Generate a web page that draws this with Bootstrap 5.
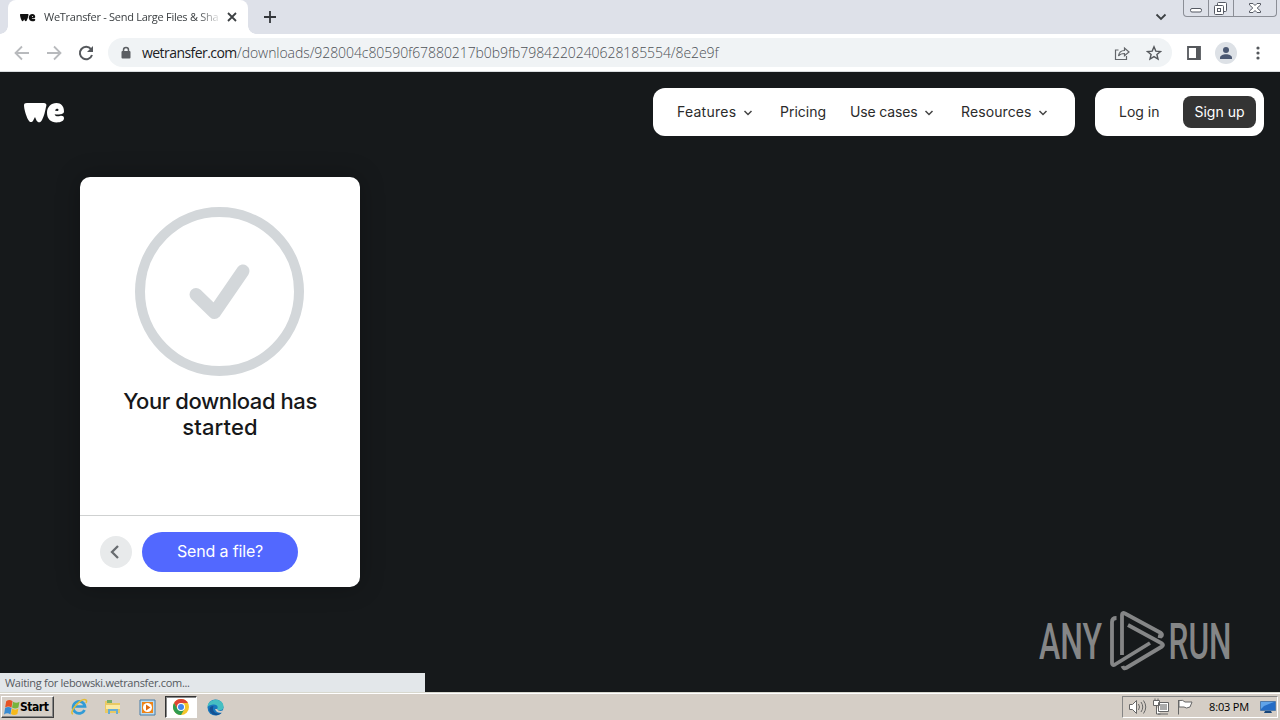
<!DOCTYPE html>
<html lang="en">
<head>
<meta charset="utf-8">
<meta name="viewport" content="width=device-width, initial-scale=1">
<title>WeTransfer - Send Large Files &amp; Share</title>
<link href="https://cdn.jsdelivr.net/npm/bootstrap@5.3.0/dist/css/bootstrap.min.css" rel="stylesheet">
<style>
body{width:1280px;height:720px;overflow:hidden;font-family:"Inter","Liberation Sans",sans-serif;background:#16191b}
svg{display:block;flex:none}
.sys{font-family:"Open Sans","Noto Sans",sans-serif}
.tabstrip{height:34px;background:#dee1e9}
.tab-page{width:240px;height:34px;margin-left:8px;background:#fff;border-radius:8px 8px 0 0;padding:0 11px 0 12px}
.tab-page::before,.tab-page::after{content:"";position:absolute;bottom:0;width:8px;height:8px}
.tab-page::before{left:-8px;background:radial-gradient(circle at 0 0,transparent 7.5px,#fff 8px)}
.tab-page::after{right:-8px;background:radial-gradient(circle at 100% 0,transparent 7.5px,#fff 8px)}
.tab-name{width:176px;margin-left:8px;font-size:11px;line-height:16px;letter-spacing:-.27px;color:#3c4043;-webkit-mask:linear-gradient(90deg,#000 154px,transparent 178px);mask:linear-gradient(90deg,#000 154px,transparent 178px)}
.toolbar{height:38px;background:#fff;border-bottom:1px solid #d9dcdf}
.omnibox{width:1064px;height:29px;margin-left:13px;background:#f0f3f5;border-radius:15px;padding:0 10px 0 12px}
.address{font-size:14px;line-height:20px;font-weight:300;color:#4d5156;letter-spacing:-.07px;margin-left:10px}
.address b{font-weight:400;color:#202124;letter-spacing:-.56px}
.address b,.address span{display:inline-block}
.address b{width:95px}
.avatar{width:22px;height:22px;background:#dde1e6}
.viewport{height:620px;background:#16191b}
.site-head{height:80px;padding:16px 16px 0 24px}
.pill{height:48px;background:#fff;border-radius:12px;font-size:14px;color:#2b2b2b}
.pill-main{width:422px;padding-left:24px;margin-right:20px}
.pill-user{width:169px;padding:0 8px 0 24px}
.lift{padding-bottom:2px}
.signup{width:73px;height:32px;background:#343434;color:#fff;border-radius:8px}
.transfer{width:280px;height:410px;margin:25px 0 0 80px;border-radius:10px;box-shadow:0 0 24px rgba(0,0,0,.28);background:#fff}
.done{height:338px;padding-top:30px}
.done h1{font-size:22px;line-height:26px;font-weight:500;color:#17181a;margin:11px 0 0;letter-spacing:-.42px}
.done h1 span{letter-spacing:.1px}
.foot{height:72px;border-top:1px solid #cfd1d1;padding-left:20px;gap:10px}
.back-btn{width:32px;height:32px;background:#e8eaeb;border:0}
.send-btn{width:156px;height:40px;background:#5268ff;color:#fff;border:0;border-radius:20px;font-size:16px;letter-spacing:-.15px}
.send-btn span{display:block;padding-bottom:2px}
.watermark{right:37px;bottom:20px}
.status{left:0;bottom:0;width:425px;height:19px;background:#e3e7ea;color:#55595e;font-size:11px;line-height:20px;letter-spacing:-.29px;padding-left:5px}
.taskbar{height:28px;background:#d5cec6;border-top:1px solid #d8d8ce;box-shadow:inset 0 1px #fff;padding:2px 2px 1px 1px;color:#000}
.start{width:53px;height:22px;border:1px solid;border-color:#fff #404040 #404040 #fff;box-shadow:inset -1px -1px #888;font:700 12px "DejaVu Sans Condensed","Noto Sans",sans-serif;letter-spacing:-.45px;padding-left:1px}
.quick{width:32px;height:22px}
.quick-on{background:#fff;border:1px solid;border-color:#333 #fff #fff #333;box-shadow:inset 1px 1px #888}
.tray{width:156px;height:22px;border:1px solid;border-color:#858585 #fff #fff #858585;font-size:11px}
.winctl{right:3px;top:0;width:94px;height:17px;border:1px solid #8b8e96;border-top:0;border-radius:0 0 4px 4px}
</style>
</head>
<body>
<header class="tabstrip sys d-flex position-relative">
  <div class="tab-page position-relative d-flex align-items-center">
    <svg width="16" height="9" viewBox="0 0 42 21"><use href="#we-mark" fill="#111"/></svg>
    <div class="tab-name text-nowrap">WeTransfer - Send Large Files &amp; Sha</div>
    <svg class="ms-auto" width="10" height="10" viewBox="0 0 10 10"><path d="M1 1l8 8M9 1L1 9" stroke="#3c4043" stroke-width="1.8"/></svg>
  </div>
  <svg class="mt-2" width="18" height="18" viewBox="0 0 18 18" style="margin-left:13px"><path d="M9 3v12M3 9h12" stroke="#34373b" stroke-width="1.8"/></svg>
  <svg class="ms-auto" width="12" height="34" viewBox="0 0 12 34" style="margin-right:113px"><path d="M1.5 14.500L6 19l4.500-4.500" fill="none" stroke="#3c4043" stroke-width="1.8"/></svg>
  <div class="winctl position-absolute">
    <svg width="92" height="16" viewBox="0 0 92 16" fill="none" stroke="#555963"><path d="M24.500 0v16M49.500 0v16" stroke="#8b8e96"/><rect x="6.500" y="8.500" width="11" height="3.500" rx="1.500" fill="#fff"/><rect x="33.500" y="2.500" width="9" height="9" rx="1" fill="#fff"/><rect x="30.500" y="5.500" width="9" height="9" rx="1" fill="#fff"/><rect x="33.500" y="8.500" width="3" height="3"/><path d="M65.500 3.500h3.500l2 2 2-2h3.500v1.500L73.200 8l3.300 3v1.500H73l-2-2-2 2h-3.500V11l3.300-3-3.300-3z" fill="#fff"/></svg>
  </div>
</header>
<div class="toolbar sys d-flex align-items-center">
  <svg width="95" height="20" viewBox="0 0 95 20" fill="none" stroke="#b8babd" stroke-width="1.800"><path d="M29 10H16M22 3.500L15.500 10l6.500 6.500M47 10h13M54 3.500l6.500 6.500-6.500 6.500"/><path d="M91 6.200A6.200 6.200 0 1 0 92 12" stroke="#55585c" stroke-width="2"/><path d="M93 3v6h-6z" fill="#55585c" stroke="none"/></svg>
  <div class="omnibox d-flex align-items-center">
    <svg width="12" height="14" viewBox="0 0 12 14"><path d="M3.500 6V4a2.500 2.500 0 0 1 5 0v2" fill="none" stroke="#5b5e62" stroke-width="1.500"/><rect x="1.500" y="5" width="9" height="7.500" rx="1" fill="#5b5e62"/></svg>
    <div class="address text-nowrap"><b>wetransfer.com</b><span>/downloads/928004c80590f67880217b0b9fb7984220240628185554/8e2e9f</span></div>
    <svg class="ms-auto" width="16" height="16" viewBox="0 0 16 16" fill="none" stroke="#63666a" stroke-width="1.200"><path d="M4.500 5H1.500v9.500h11V11M4.500 11c.5-4 3-5.500 6-5.500V3l4.500 4-4.500 3.800V8.500c-3 0-4.800.7-6 2.500z"/></svg>
    <svg width="16" height="16" viewBox="0 0 16 16" style="margin-left:16px" fill="none" stroke="#55585c" stroke-width="1.400"><path d="M8 1.800l1.800 4.300 4.700.4-3.600 3 1.100 4.600L8 11.600l-4 2.500 1.100-4.600-3.600-3 4.700-.4z"/></svg>
  </div>
  <svg width="14" height="14" viewBox="0 0 14 14" style="margin-left:15px"><path d="M1 1h12v12H1z" fill="none" stroke="#55585c" stroke-width="1.800"/><path d="M9 1h4v12H9z" fill="#55585c"/></svg>
  <div class="avatar rounded-circle" style="margin-left:14px"><svg width="22" height="22" viewBox="0 0 22 22" fill="#4b5872"><circle cx="11" cy="8" r="3"/><path d="M5 16c0-5 12-5 12 0v1H5z"/></svg></div>
  <svg width="4" height="16" viewBox="0 0 4 16" style="margin-left:19px" fill="#55585c"><circle cx="2" cy="3" r="1.600"/><circle cx="2" cy="8" r="1.600"/><circle cx="2" cy="13" r="1.600"/></svg>
</div>
<main class="viewport position-relative">
  <div class="site-head d-flex">
    <svg width="42" height="21" viewBox="0 0 42 21" style="margin-top:14px"><defs><g id="we-mark"><path d="M0 3C0 1 2 1 5 1h14c3 0 4 1 3 4-1 5-2 9-4 13-1.500 3-4 3-5.500.5L11 15l-1.800 3.500C7.800 21 5.500 20.500 4 17.500 2 13.500 0 7 0 3z"/><path d="M40 9.500C40 4 37 1 32.500 1 27 1 23 5 23 10.800 23 17 27 20.500 32.500 20.500c4.500 0 7.500-1.800 7.500-4.200 0-2.200-2-2.800-4-2.300-3 .8-5 .1-5.300-1.800 3 .6 9.300.6 9.300-2.700zM31 8.500c.8-2.200 3.600-2.200 3.500-.5-.1 1.200-2 1.200-3.500.5z" fill-rule="evenodd"/></g></defs><use href="#we-mark" fill="#fff"/></svg>
    <nav class="pill pill-main d-flex align-items-center ms-auto text-nowrap">
      <div class="d-flex align-items-center" style="width:103px"><span class="lift" style="width:66px;letter-spacing:.25px">Features</span><svg width="10" height="8" viewBox="0 0 10 8"><path d="M1.500 3L5 6.500 8.500 3" fill="none" stroke="#444" stroke-width="1.500"/></svg></div>
      <div class="lift" style="width:70px">Pricing</div>
      <div class="d-flex align-items-center" style="width:111px"><span class="lift" style="width:74px;letter-spacing:-.15px">Use cases</span><svg width="10" height="8" viewBox="0 0 10 8"><path d="M1.500 3L5 6.500 8.500 3" fill="none" stroke="#444" stroke-width="1.500"/></svg></div>
      <div class="d-flex align-items-center"><span class="lift" style="width:77px;letter-spacing:.1px">Resources</span><svg width="10" height="8" viewBox="0 0 10 8"><path d="M1.500 3L5 6.500 8.500 3" fill="none" stroke="#444" stroke-width="1.500"/></svg></div>
    </nav>
    <div class="pill pill-user d-flex align-items-center justify-content-between text-nowrap"><span class="lift">Log in</span><span class="signup lift d-flex align-items-center justify-content-center">Sign up</span></div>
  </div>
  <section class="transfer">
    <div class="done text-center">
      <svg class="mx-auto" width="170" height="170" viewBox="0 0 170 170" fill="none" stroke="#d3d7da"><circle cx="84.500" cy="84.500" r="79.500" stroke-width="10"/><path d="M61 87.500L79.500 105.500 108 64" stroke-width="13" stroke-linecap="round" stroke-linejoin="round"/></svg>
      <h1>Your download has<br><span>started</span></h1>
    </div>
    <div class="foot d-flex align-items-center">
      <button class="back-btn rounded-circle p-0" aria-label="Back"><svg width="32" height="32" viewBox="0 0 32 32"><path d="M18 10l-6 6 6 6" fill="none" stroke="#686c70" stroke-width="2.300"/></svg></button>
      <button class="send-btn p-0"><span>Send a file?</span></button>
    </div>
  </section>
  <svg class="watermark position-absolute" width="204" height="62" viewBox="0 0 204 62" fill="#858687">
    <g font-family="Roboto, sans-serif" font-size="50" font-weight="500"><text x="0" y="48.500" textLength="63" lengthAdjust="spacingAndGlyphs">ANY</text><text x="129.500" y="48.500" textLength="63" lengthAdjust="spacingAndGlyphs">RUN</text></g>
    <g fill="none" stroke="#858687" stroke-width="3.800" stroke-linejoin="round"><path d="M77.500 8q-4.500 0-4.500 4v41q0 3 3 1.500L111 33"/><path d="M83 45V5q0-3 3-1.500L122 23q2 1.500 0 3.500l-3-.5"/><path d="M89 15l34 18.500q2 1.500 0 3L87 58q-2.500 1-3.500-2"/></g>
  </svg>
  <div class="status sys position-absolute">Waiting for lebowski.wetransfer.com...</div>
</main>
<footer class="taskbar sys d-flex align-items-center">
  <div class="start d-flex align-items-center"><svg width="17" height="17" viewBox="0 0 16 16"><path d="M3 2q3-2 6 0L8 8Q5 6 2 8z" fill="#e65325"/><path d="M9.500 2.500q3 2 6 0L14.500 8q-3 2-6 0z" fill="#78b43c"/><path d="M2 8.500q3-2 6 0l-1 6q-3-2-6 0z" fill="#398bd2"/><path d="M8.500 9q3 2 6 0l-1 5q-3 2-6 0z" fill="#f6b91b"/></svg><span>Start</span></div>
  <div class="quick d-flex align-items-center justify-content-center" style="margin-left:9px"><svg width="18" height="18" viewBox="0 0 18 18" fill="none"><path d="M14.500 12A6 6 0 1 1 15 8.500H5" stroke="#319bd6" stroke-width="2.700"/><path d="M3 16C-2 15 11-1 16 2c1 .5.500 2 0 3" stroke="#e3bd35" stroke-width="1.500"/></svg></div>
  <div class="quick d-flex align-items-center justify-content-center" style="margin-left:2px"><svg width="18" height="18" viewBox="0 0 18 18"><path d="M1 3h6l1 2h8v10H1z" fill="#e9c963"/><path d="M3 2h5v3H3z" fill="#78ae69"/><path d="M2 7h14v4H2z" fill="#fae9a3"/><path d="M4 16v-5h10v5h-2v-3H6v3z" fill="#68add3"/></svg></div>
  <div class="quick d-flex align-items-center justify-content-center" style="margin-left:2px"><svg width="17" height="17" viewBox="0 0 17 17"><path d="M1 1h15v15H1z" fill="#bcdcf0" stroke="#467da8"/><path d="M3 3h11v11H3z" fill="#ee8418"/><circle cx="8.500" cy="8.500" r="4.500" fill="#fff"/><path d="M7 5.500l4.500 3-4.500 3z" fill="#e06a10"/></svg></div>
  <div class="quick quick-on d-flex align-items-center justify-content-center" style="margin-left:2px"><svg width="16" height="16" viewBox="0 0 16 16"><circle cx="8" cy="8" r="8" fill="#f5c52b"/><path d="M1.070 4A8 8 0 0 1 14.930 4H8L4.500 10z" fill="#de4435"/><path d="M1.070 4A8 8 0 0 0 8 16l3.500-6H4.500z" fill="#2f9b50"/><circle cx="8" cy="8" r="4" fill="#fff"/><circle cx="8" cy="8" r="3" fill="#4287ec"/></svg></div>
  <div class="quick d-flex align-items-center justify-content-center" style="margin-left:2px"><svg width="17" height="17" viewBox="0 0 17 17"><circle cx="8.500" cy="8.500" r="8" fill="#1877bd"/><path d="M.5 8C1-1 16-2 16.500 7.500 17 12 11 12 10 10c2-3-1-5-4-4.500C3 6 1 7 .5 8z" fill="#45bfc2"/><path d="M6.500 7c-2 5 2 9 8 7-4 4-11 2-12-3-.3-2 1-4 4-4z" fill="#145194"/><path d="M10 10q2 3.300 6.500 1l-1 2.500Q10 15 8 10z" fill="#d5cec6"/></svg></div>
  <div class="tray d-flex align-items-center ms-auto">
    <svg width="72" height="20" viewBox="0 0 72 20" fill="#fff" stroke="#666"><path d="M6.500 7.500h3l4-4v13l-4-4h-3z"/><path d="M15.500 7q2 3 0 6M18 5q3.500 5 0 10M20.500 3.500q4.500 6.500 0 13" fill="none"/><path d="M35.500 5.500h10v9h-10zM35 17h10M33.500 9v8h4M30.500 3.500h6v5h-6zM32 1.500v2M35 1.500v2"/><path d="M37 7h7v6h-7z" fill="#aaa" stroke="none"/><path d="M55.500 3v14.500M56 3.500q4-1 6 1.500h7l-2 5q-4 2-6 0h-5z"/></svg>
    <span class="text-nowrap" style="margin-left:14px;width:51px;letter-spacing:-.15px">8:03 PM</span>
    <svg width="16" height="16" viewBox="0 0 16 16"><path d="M.5 2.500h15v9H.5z" fill="#256cc5" stroke="#507aaa"/><path d="M1 3h13L4 7 1 10z" fill="#60a3e8"/><path d="M5 12h6l1 2H4z" fill="#174579"/></svg>
  </div>
</footer>
<script src="https://cdn.jsdelivr.net/npm/bootstrap@5.3.0/dist/js/bootstrap.bundle.min.js"></script>
</body>
</html>
